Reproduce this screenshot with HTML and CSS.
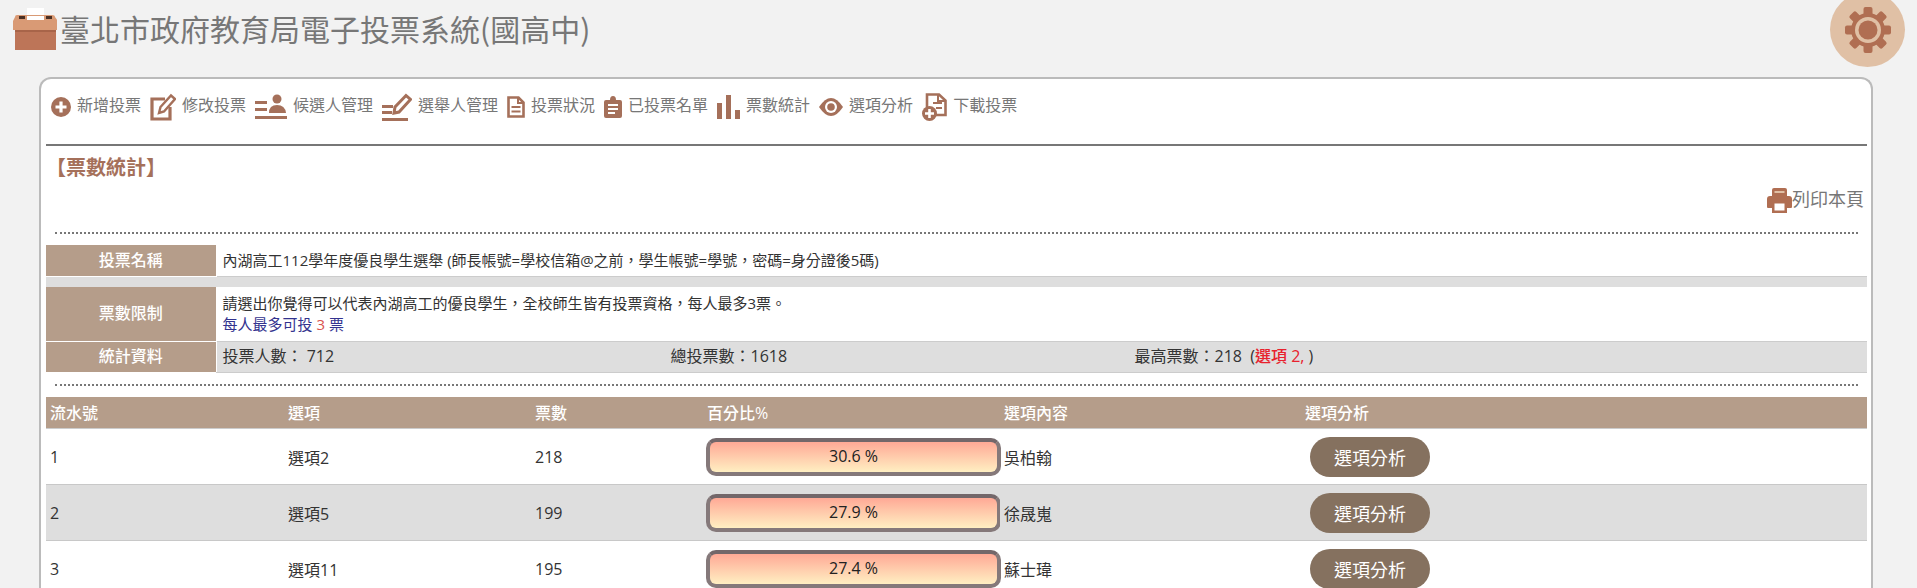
FILE: index.html
```html
<!DOCTYPE html>
<html lang="zh-Hant">
<head>
<meta charset="utf-8">
<title>臺北市政府教育局電子投票系統(國高中)</title>
<link rel="stylesheet" href="styles.css">
</head>
<body>
<header class="top">
  <div class="brand">
    <svg class="logo" viewBox="0 0 45 42" width="45" height="42"><rect x="15" y="0" width="17" height="12" fill="#fff"/><path d="M3 9Q3 7 5 7H40Q43 7 43 9L46 13V22H1V13Z" fill="#d99a75"/><rect x="7" y="8" width="6" height="3" fill="#4a3024"/><rect x="34" y="8" width="6" height="3" fill="#4a3024"/><rect x="15" y="8" width="17" height="4" fill="#fff"/><rect x="3" y="22" width="41" height="20" fill="#bd7558"/><rect x="3" y="22" width="41" height="2" fill="#a86449"/></svg>
    <h1 class="site-title">臺北市政府教育局電子投票系統(國高中)</h1>
  </div>
  <div class="gear-btn">
    <svg viewBox="0 0 48 48" width="48" height="48"><g fill="#b06e52"><circle cx="24" cy="24" r="17"/><rect x="19.5" y="1" width="9" height="46" rx="2"/><rect x="19.5" y="1" width="9" height="46" rx="2" transform="rotate(45 24 24)"/><rect x="19.5" y="1" width="9" height="46" rx="2" transform="rotate(90 24 24)"/><rect x="19.5" y="1" width="9" height="46" rx="2" transform="rotate(135 24 24)"/></g><circle cx="24" cy="24" r="13" fill="#e0c0a5"/><circle cx="24" cy="24" r="9.5" fill="#b06e52"/></svg>
  </div>
</header>

<main class="card">
  <nav class="nav">
    <a class="nav-item"><svg class="ico" viewBox="0 0 20 20" width="20" height="20"><circle cx="10" cy="10" r="10" fill="#a5705a"/><path d="M10 4.5v11M4.5 10h11" stroke="#fff" stroke-width="3.2"/></svg><span>新增投票</span></a>
    <a class="nav-item"><svg class="ico" viewBox="0 0 26 28" width="26" height="28"><path d="M15 6H2v20h18V14" fill="none" stroke="#a5705a" stroke-width="3.2"/><path d="M9 20l1.500-6L21 2.500l4 3.500L14 18.500z" fill="none" stroke="#a5705a" stroke-width="2.400"/></svg><span>修改投票</span></a>
    <a class="nav-item"><svg class="ico" viewBox="0 0 32 26" width="32" height="26"><g fill="#a5705a"><rect x="0" y="7" width="12" height="3"/><rect x="0" y="14" width="12" height="3"/><rect x="0" y="22" width="32" height="3"/><circle cx="22" cy="5" r="4.500"/><path d="M14 19q0-8 8-8t9 8z"/></g></svg><span>候選人管理</span></a>
    <a class="nav-item"><svg class="ico" viewBox="0 0 30 28" width="30" height="28"><g fill="#a5705a"><rect x="0" y="12" width="11" height="3"/><rect x="0" y="18" width="10" height="3"/><rect x="0" y="25" width="26" height="3"/></g><path d="M12 20l1-6L24 2.500l4.500 4L17 19z" fill="#fff" stroke="#a5705a" stroke-width="3"/></svg><span>選舉人管理</span></a>
    <a class="nav-item"><svg class="ico" viewBox="0 0 18 22" width="18" height="22"><path d="M1.500 1.500h10l5 5v14h-15z" fill="none" stroke="#a5705a" stroke-width="2.600"/><path d="M11 1v6h6M4.500 11h9M4.500 15.500h9" fill="none" stroke="#a5705a" stroke-width="2"/></svg><span>投票狀況</span></a>
    <a class="nav-item"><svg class="ico" viewBox="0 0 18 22" width="18" height="22"><path d="M2 4h4q0-4 3-4t3 4h4q2 0 2 2v14q0 2-2 2H2q-2 0-2-2V6q0-2 2-2z" fill="#a5705a"/><path d="M4 9h10M4 13h10M4 17h7" stroke="#fff" stroke-width="1.800"/></svg><span>已投票名單</span></a>
    <a class="nav-item"><svg class="ico" viewBox="0 0 23 24" width="23" height="24"><g fill="#a5705a"><rect x="0" y="8" width="5" height="16"/><rect x="9" y="0" width="5" height="24"/><rect x="18" y="15" width="5" height="9"/></g></svg><span>票數統計</span></a>
    <a class="nav-item"><svg class="ico" viewBox="0 0 24 18" width="24" height="18"><path d="M0 9Q6 0 12 0t12 9q-6 9-12 9T0 9z" fill="#a5705a"/><circle cx="12" cy="9" r="6" fill="#fff"/><circle cx="12" cy="9" r="3.800" fill="#a5705a"/></svg><span>選項分析</span></a>
    <a class="nav-item"><svg class="ico" viewBox="0 0 25 28" width="25" height="28"><path d="M5 14V1.500h12l6.500 6V22H14" fill="none" stroke="#a5705a" stroke-width="2.600"/><path d="M16 1v7h8M11 10h9M14 15h6" fill="none" stroke="#a5705a" stroke-width="2"/><circle cx="7.500" cy="20.500" r="7.500" fill="#a5705a"/><path d="M7.500 16v9M3 20.500h9" stroke="#fff" stroke-width="2.600"/></svg><span>下載投票</span></a>
  </nav>
  <hr class="rule">
  <h2 class="page-title">【票數統計】</h2>
  <div class="print-row">
    <a class="print"><svg viewBox="0 0 25 25" width="25" height="25"><path d="M5 8V2q0-2 2-2h11q2 0 2 2v6h2q3 0 3 3v8q0 1-1 1h-4v5H5v-5H1q-1 0-1-1v-8q0-3 3-3z" fill="#b06e52"/><rect x="7.500" y="3" width="10" height="2" fill="#e0c0a5"/><rect x="7.500" y="15.500" width="10" height="7" fill="#fff"/></svg><span>列印本頁</span></a>
  </div>
  <div class="dots dots-a"></div>

  <table class="info">
    <tr class="r-name"><th>投票名稱</th><td>內湖高工112學年度優良學生選舉 (師長帳號=學校信箱@之前，學生帳號=學號，密碼=身分證後5碼)</td></tr>
    <tr class="r-sep"><td colspan="2"></td></tr>
    <tr class="r-limit"><th>票數限制</th><td>請選出你覺得可以代表內湖高工的優良學生，全校師生皆有投票資格，每人最多3票。<br><span class="limit">每人最多可投 <span class="num">3</span> 票</span></td></tr>
    <tr class="r-stat"><th>統計資料</th><td><div class="stats"><span class="s1">投票人數： 712</span><span class="s2">總投票數：1618</span><span>最高票數：218 &nbsp;(<span class="hot">選項 2,</span> )</span></div></td></tr>
  </table>
  <div class="dots dots-b"></div>

  <table class="votes">
    <colgroup><col class="c1"><col class="c2"><col class="c3"><col class="c4"><col class="c5"><col class="c6"></colgroup>
    <thead><tr><th>流水號</th><th>選項</th><th>票數</th><th>百分比%</th><th>選項內容</th><th>選項分析</th></tr></thead>
    <tbody>
      <tr><td>1</td><td>選項2</td><td>218</td><td class="td-bar"><div class="bar">30.6 %</div></td><td>吳柏翰</td><td><button class="btn">選項分析</button></td></tr>
      <tr class="alt"><td>2</td><td>選項5</td><td>199</td><td class="td-bar"><div class="bar">27.9 %</div></td><td>徐晟嵬</td><td><button class="btn">選項分析</button></td></tr>
      <tr><td>3</td><td>選項11</td><td>195</td><td class="td-bar"><div class="bar">27.4 %</div></td><td>蘇士瑋</td><td><button class="btn">選項分析</button></td></tr>
    </tbody>
  </table>
</main>
</body>
</html>
```
FILE: styles.css
```css
html { overflow-y: scroll; }
html::-webkit-scrollbar { width: 15px; }
html::-webkit-scrollbar-track { background: #c1c1c1; }
html::-webkit-scrollbar-thumb { background: #c1c1c1; }
* { box-sizing: border-box; }
body {
  margin: 0;
  background: #f2f2f2;
  color: #333;
  font-family: "Open Sans", "Noto Sans CJK TC", sans-serif;
  font-size: 16px;
}
.top {
  height: 77px;
  display: flex;
  justify-content: space-between;
  align-items: flex-start;
  padding: 8px 12px 0 12px;
}
.brand { display: flex; align-items: flex-start; }
.site-title {
  margin: -5px 0 0 3px;
  font-size: 30px;
  font-weight: 400;
  line-height: 50px;
  color: #777;
  font-family: "Noto Sans CJK TC", sans-serif;
}
.gear-btn {
  width: 75px;
  height: 75px;
  margin-top: -16px;
  border-radius: 50%;
  background: #e0c0a5;
  display: flex;
  align-items: center;
  justify-content: center;
}
.card {
  margin: 0 44px 24px 39px;
  padding: 0 4px 20px 5px;
  background: #fff;
  border: 2px solid #bbb;
  border-bottom: 0;
  border-radius: 12px 12px 0 0;
}
.nav {
  height: 65px;
  padding: 14px 0 0 5px;
  display: flex;
  align-items: flex-start;
  gap: 9px;
}
.nav-item {
  height: 28px;
  display: flex;
  align-items: center;
  gap: 6px;
  color: #777;
  font-size: 16px;
  line-height: 24px;
}
.nav-item span { margin-top: -5px; }
.rule { margin: 0; height: 2px; border: 0; background: #777; }
.page-title {
  margin: 7px 0 0;
  font-size: 20px;
  line-height: 30px;
  font-weight: 700;
  color: #a5705a;
}
.print-row { display: flex; justify-content: flex-end; padding: 3px 3px 0 0; height: 32px; }
.print { display: flex; align-items: center; color: #777; font-size: 18px; line-height: 25px; }
.print span { margin-top: -2px; }
.dots { margin: 0 9px 0 9px; border-top: 2px dotted #777; height: 2px; }
.dots-a { margin-top: 17px; }
.dots-b { margin-top: 11px; }
.info {
  width: 100%;
  margin-top: 11px;
  border-collapse: collapse;
  table-layout: fixed;
  font-size: 15px;
  line-height: 21px;
}
.info th {
  width: 170px;
  background: #b59d8a;
  color: #fff;
  font-size: 16px;
  font-weight: 500;
  padding: 0;
  border-bottom: 1px solid #fff;
}
.info td { padding: 0 6px; border-left: 1px solid #fff; }
.r-name { height: 31px; }
.r-sep td { height: 11px; background: #dedede; padding: 0; border-left: 0; border-top: 1px solid #ccc; }
.r-limit { height: 54px; }
.r-stat { height: 31px; }
.r-stat td { background: #dedede; font-size: 16px; border-top: 1px solid #ccc; border-bottom: 1px solid #ccc; }
.r-stat th { border-bottom: 0; }
.stats { display: flex; }
.s1 { width: 448px; }
.s2 { width: 464px; }
.limit { color: #33338f; }
.num { color: #d9534f; }
.hot { color: #e8212d; font-weight: 500; }
.votes {
  width: 100%;
  margin-top: 11px;
  border-collapse: collapse;
  table-layout: fixed;
  font-size: 16px;
}
.c1 { width: 238px; }
.c2 { width: 247px; }
.c3 { width: 172px; }
.c4 { width: 297px; }
.c5 { width: 301px; }
.votes th {
  height: 32px;
  padding: 0 4px;
  text-align: left;
  font-weight: 500;
  color: #fff;
  background: #b59d8a;
  border-bottom: 1px solid #ccc;
}
.votes td { height: 56px; padding: 0 4px; border-bottom: 1px solid #c8c8c8; color: #333; }
.alt td { background: #dedede; }
.votes .td-bar { padding: 0 0 0 3px; }
.bar {
  width: 295px;
  height: 38px;
  border: 4px solid #85797a;
  border-top-color: #73676a;
  border-radius: 10px;
  background: linear-gradient(#ffa996, #ffefc2);
  text-align: center;
  line-height: 28px;
  color: #222;
  font-weight: 500;
}
.btn {
  display: block;
  width: 120px;
  height: 40px;
  margin-left: 5px;
  border: 0;
  border-radius: 20px;
  background: #85715f;
  color: #fff;
  font-family: inherit;
  font-size: 18px;
}
```
